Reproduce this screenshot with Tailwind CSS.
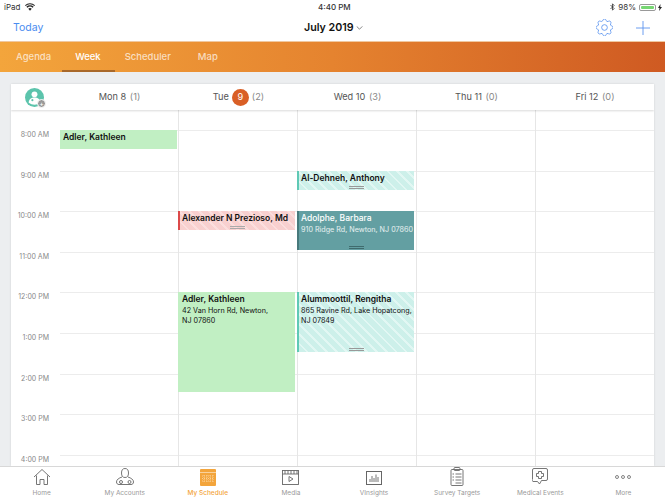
<!DOCTYPE html>
<html lang="en">
<head>
    <meta charset="UTF-8">
    <meta name="viewport" content="width=device-width, initial-scale=1.0">
    <title>My Schedule</title>
    <script src="https://cdn.jsdelivr.net/npm/@tailwindcss/browser@4"></script>
</head>
<body class="w-[665px] h-[498px] overflow-hidden bg-[#eceef0] font-['Inter','Liberation_Sans',sans-serif]">
    <div class="flex flex-col h-[498px]">
        <!-- Status bar -->
        <div class="relative flex items-center justify-between h-[14px] pl-1 pr-[3px] bg-white text-[8px] leading-none text-[#333] shrink-0">
            <div class="flex items-center gap-[5px]">
                <span>iPad</span>
                <svg class="w-[10px] h-[8px]" viewBox="0 0 12 9"><path d="M6 9 3.9 6.6a3 3 0 0 1 4.2 0zM2.9 5.5 1.6 4.1a6.3 6.3 0 0 1 8.8 0L9.1 5.5a4.4 4.4 0 0 0-6.2 0zM.8 3.2 0 2.3a8.6 8.6 0 0 1 12 0l-.8.9a7.5 7.5 0 0 0-10.4 0z" fill="#222"/></svg>
            </div>
            <span class="absolute left-[318px] font-medium">4:40 PM</span>
            <div class="flex items-center gap-[2px]">
                <svg class="w-[5px] h-[8px] mr-[1px]" viewBox="0 0 6 10"><path d="M.5 2.5 5 7 3 9V1l2 2-4.500 4.500" fill="none" stroke="#333" stroke-width="1"/></svg>
                <span>98%</span>
                <div class="w-[17px] h-[7px] ml-[1px] border border-[#999] rounded-[2px] p-[1px]"><div class="h-full bg-[#76d672] rounded-[1px]"></div></div>
                <svg class="w-[4px] h-[7px]" viewBox="0 0 4 7"><path d="M2.500 0 0 4h1.500L1 7l3-4H2.300z" fill="#222"/></svg>
            </div>
        </div>

        <!-- Nav bar -->
        <div class="relative flex items-center justify-between h-[27px] pl-[13px] pr-[15px] bg-white shrink-0">
            <span class="text-[10.5px] text-[#4a8cf0]">Today</span>
            <div class="absolute left-[304px] top-[5px] flex items-center gap-[2px]">
                <span class="text-[10.7px] leading-[17px] font-semibold text-[#111]">July 2019</span>
                <svg class="w-[7px] h-[4px] text-[#555]" viewBox="0 0 8 5"><path d="M.5.5 4 4 7.500.5" fill="none" stroke="currentColor" stroke-width="0.9"/></svg>
            </div>
            <div class="flex items-center gap-[23px]">
                <svg class="w-[17px] h-[17px] text-[#5b93ee]" viewBox="3 3 18 18" fill="none" stroke="currentColor" stroke-width="0.9"><path d="M10.325 4.317c.426-1.756 2.924-1.756 3.35 0a1.724 1.724 0 002.573 1.066c1.543-.94 3.31.826 2.37 2.37a1.724 1.724 0 001.065 2.572c1.756.426 1.756 2.924 0 3.35a1.724 1.724 0 00-1.066 2.573c.94 1.543-.826 3.31-2.37 2.37a1.724 1.724 0 00-2.572 1.065c-.426 1.756-2.924 1.756-3.35 0a1.724 1.724 0 00-2.573-1.066c-1.543.94-3.31-.826-2.37-2.37a1.724 1.724 0 00-1.065-2.572c-1.756-.426-1.756-2.924 0-3.35a1.724 1.724 0 001.066-2.573c-.94-1.543.826-3.31 2.37-2.37.996.608 2.296.07 2.572-1.065z"/><circle cx="12" cy="12" r="3"/></svg>
                <svg class="w-[14px] h-[14px] text-[#5b93ee]" viewBox="0 0 14 14"><path d="M7 0v14M0 7h14" stroke="currentColor" stroke-width="0.9"/></svg>
            </div>
        </div>

        <!-- Orange tabs -->
        <div class="relative flex items-center h-[31px] border-t border-[#f0c8a0] bg-[linear-gradient(90deg,#f3a53c_0%,#e5832f_50%,#cf5a22_100%)] text-[9.5px] font-medium text-white/70 shrink-0">
            <span class="ml-[16px]">Agenda</span>
            <span class="relative ml-[24px] text-white">Week
                <span class="absolute left-[-13px] right-[-14px] top-[20px] h-[2px] bg-[#a8682a]"></span>
            </span>
            <span class="ml-[24px]">Scheduler</span>
            <span class="ml-[27px]">Map</span>
        </div>

        <!-- Calendar card -->
        <div class="flex-1 min-h-0 mx-[11px] mt-[12px] bg-white flex flex-col overflow-hidden shadow-[0_0_2px_rgba(0,0,0,0.12)]">
            <div class="relative z-10 flex items-center h-[26px] bg-white text-[9.2px] text-[#555] shadow-[0_1px_2px_rgba(0,0,0,0.15)] shrink-0">
                <div class="w-[49px] shrink-0 pl-[14px]">
                    <div class="relative w-[19px] h-[19px] rounded-full bg-[#5cc4ac]">
                        <svg class="w-[19px] h-[19px]" viewBox="0 0 18 18"><circle cx="9" cy="6" r="2.800" fill="#fff"/><path d="M3.500 14c0-3.500 2.500-5 5.500-5s5.500 1.500 5.500 5a9 9 0 0 1-11 0z" fill="#fff"/><circle cx="7" cy="11.500" r="1" fill="#5cc4ac"/></svg>
                        <span class="absolute right-[-2px] bottom-[-1px] flex items-center justify-center w-[9px] h-[9px] rounded-full bg-[#999] border border-white text-[7px] leading-none text-white">+</span>
                    </div>
                </div>
                <div class="w-[119px] text-center">Mon 8 <span class="ml-[1px] text-[#888]">(1)</span></div>
                <div class="w-[119px] flex items-center justify-center gap-[3px]">Tue <span class="flex items-center justify-center w-[17px] h-[17px] rounded-full bg-[#d95f26] text-white">9</span> <span class="text-[#888]">(2)</span></div>
                <div class="w-[119px] text-center">Wed 10 <span class="ml-[1px] text-[#888]">(3)</span></div>
                <div class="w-[119px] text-center">Thu 11 <span class="ml-[1px] text-[#888]">(0)</span></div>
                <div class="w-[118px] text-center">Fri 12 <span class="ml-[1px] text-[#888]">(0)</span></div>
            </div>

            <!-- Week grid -->
            <div class="flex flex-1 min-h-0 pt-[20px]">
                <div class="w-[49px] shrink-0 pr-[11px] text-right text-[7px] text-[#888] whitespace-nowrap">
                    <div class="h-[40.6px] leading-[9px]">8:00 AM</div>
                    <div class="h-[40.6px] leading-[9px]">9:00 AM</div>
                    <div class="h-[40.6px] leading-[9px]">10:00 AM</div>
                    <div class="h-[40.6px] leading-[9px]">11:00 AM</div>
                    <div class="h-[40.6px] leading-[9px]">12:00 PM</div>
                    <div class="h-[40.6px] leading-[9px]">1:00 PM</div>
                    <div class="h-[40.6px] leading-[9px]">2:00 PM</div>
                    <div class="h-[40.6px] leading-[9px]">3:00 PM</div>
                    <div class="h-[40.6px] leading-[9px]">4:00 PM</div>
                </div>
                <div class="relative flex-1 -mt-[20px] pt-[20px]">
                    <!-- Hour lines -->
                    <div class="border-t border-[#ececec] h-[40.6px]"></div>
                    <div class="border-t border-[#ececec] h-[40.6px]"></div>
                    <div class="border-t border-[#ececec] h-[40.6px]"></div>
                    <div class="border-t border-[#ececec] h-[40.6px]"></div>
                    <div class="border-t border-[#ececec] h-[40.6px]"></div>
                    <div class="border-t border-[#ececec] h-[40.6px]"></div>
                    <div class="border-t border-[#ececec] h-[40.6px]"></div>
                    <div class="border-t border-[#ececec] h-[40.6px]"></div>
                    <div class="border-t border-[#ececec] h-[40.6px]"></div>
                    <!-- Day columns -->
                    <div class="absolute inset-0 flex">
                        <div class="relative w-[119px] border-r border-[#e6e6e6]">
                            <div class="absolute left-0 top-[20px] w-[116.5px] h-[19px] px-[3px] pt-[1px] bg-[#c1efc3] text-[8.5px] leading-[12px] font-semibold text-[#111]">Adler, Kathleen</div>
                        </div>
                        <div class="relative w-[119px] border-r border-[#e6e6e6]">
                            <div class="absolute left-[-1px] top-[101px] w-[117px] h-[19px] pl-[2px] pt-[1px] border-l-2 border-[#dc4a4a] bg-[repeating-linear-gradient(45deg,#f8d0cf_0px,#f8d0cf_5px,#fbdedd_5px,#fbdedd_7px)] text-[8.5px] leading-[12px] font-semibold text-[#111] whitespace-nowrap">
                                Alexander N Prezioso, Md
                                <div class="absolute left-[50px] bottom-[1px] w-[15px] h-[3px] border-y border-[#aaa]"></div>
                            </div>
                            <div class="absolute left-[-1px] top-[182px] w-[117px] h-[99.5px] pl-[4px] pt-[1px] bg-[#c1efc3] text-[#111]">
                                <div class="text-[8.5px] leading-[12px] font-semibold">Adler, Kathleen</div>
                                <div class="mt-[1px] text-[7.2px] leading-[9.5px]">42 Van Horn Rd, Newton,<br>NJ 07860</div>
                            </div>
                        </div>
                        <div class="relative w-[119px] border-r border-[#e6e6e6]">
                            <div class="absolute left-[-1px] top-[61px] w-[117px] h-[18.5px] pl-[2px] pt-[1px] border-l-2 border-[#5fc9b5] bg-[repeating-linear-gradient(45deg,#cdf0ea_0px,#cdf0ea_5px,#e2f7f3_5px,#e2f7f3_7px)] text-[8.5px] leading-[12px] font-semibold text-[#111]">
                                Al-Dehneh, Anthony
                                <div class="absolute left-[50px] bottom-[1px] w-[15px] h-[3px] border-y border-[#999]"></div>
                            </div>
                            <div class="absolute left-[-1px] top-[101px] w-[117px] h-[39px] pl-[2px] pt-[1px] border-l-2 border-[#47797b] bg-[#639fa2] text-white whitespace-nowrap">
                                <div class="text-[8.5px] leading-[12px] font-medium">Adolphe, Barbara</div>
                                <div class="mt-[1px] text-[7.2px] leading-[9.5px] text-white/85">910 Ridge Rd, Newton, NJ 07860</div>
                                <div class="absolute left-[50px] bottom-[1px] w-[15px] h-[3px] border-y border-[#3f6b6d]"></div>
                            </div>
                            <div class="absolute left-[-1px] top-[182px] w-[117px] h-[59.5px] pl-[2px] pt-[1px] border-l-2 border-[#5fc9b5] bg-[repeating-linear-gradient(45deg,#cdf0ea_0px,#cdf0ea_5px,#e2f7f3_5px,#e2f7f3_7px)] text-[#111] whitespace-nowrap">
                                <div class="text-[8.5px] leading-[12px] font-semibold">Alummoottil, Rengitha</div>
                                <div class="mt-[1px] text-[7.2px] leading-[9.5px]">865 Ravine Rd, Lake Hopatcong,<br>NJ 07849</div>
                                <div class="absolute left-[50px] bottom-[1px] w-[15px] h-[3px] border-y border-[#999]"></div>
                            </div>
                        </div>
                        <div class="w-[119px] border-r border-[#e6e6e6]"></div>
                        <div class="flex-1"></div>
                    </div>
                </div>
            </div>
        </div>

        <!-- Bottom tab bar -->
        <div class="grid grid-cols-8 h-[32px] border-t border-[#d8d8d8] bg-white text-[6.5px] leading-[8px] text-[#999] text-center shrink-0">
            <div class="flex flex-col items-center">
                <svg class="w-[18px] h-[18px] mt-[1px]" viewBox="0 0 18 18" fill="none" stroke="#666" stroke-width="0.9"><path d="M1 9 9 1.500 17 9M3.500 7.500V16.500h3.500v-5h4v5h3.500V7.500"/></svg>
                <span class="mt-[3px]">Home</span>
            </div>
            <div class="flex flex-col items-center">
                <svg class="w-[18px] h-[18px] mt-[1px]" viewBox="0 0 18 18" fill="none" stroke="#666" stroke-width="0.9"><ellipse cx="9" cy="5" rx="3.500" ry="4.500"/><path d="M6 9c-3 1-5.500 2.500-5.500 5 0 1.500 1 2.500 2.500 2.500h12c1.500 0 2.500-1 2.500-2.500 0-2.500-2.500-4-5.500-5"/><circle cx="5" cy="14" r="1.500"/><circle cx="13.500" cy="14" r="1.500"/></svg>
                <span class="mt-[3px]">My Accounts</span>
            </div>
            <div class="flex flex-col items-center text-[#f3a53c]">
                <svg class="w-[16px] h-[17px] mt-[1.5px]" viewBox="0 0 16 17"><rect width="16" height="17" rx="1" fill="#f3a53c"/><path d="M0 3.500h16" stroke="#fff" stroke-width="0.5"/><path d="M4 6v8M7 6v8M10 6v8M13 6v8M2 7h12M2 9.500h12M2 12h12" stroke="#fbd9a8" stroke-width="0.8" stroke-dasharray="1 1"/></svg>
                <span class="mt-[3.5px] font-medium">My Schedule</span>
            </div>
            <div class="flex flex-col items-center">
                <svg class="w-[17px] h-[15px] mt-[3px]" viewBox="0 0 17 15" fill="none" stroke="#666" stroke-width="0.9"><rect x="0.5" y="0.5" width="16" height="14"/><path d="M.5 4h16M3 .5v3.500M6 .5v3.500M9 .5v3.500M12 .5v3.500M15 .5v3.500" /><path d="M7 6.500v5l4-2.500z"/></svg>
                <span class="mt-[4px]">Media</span>
            </div>
            <div class="flex flex-col items-center">
                <svg class="w-[16px] h-[14px] mt-[3.5px]" viewBox="0 0 16 14" fill="none" stroke="#666"><rect x="0.5" y="0.5" width="15" height="13" stroke-width="1"/><path d="M4 11V8M6 11V5M8 11V7M10 11V3.500M12 11V6" stroke-width="0.9"/></svg>
                <span class="mt-[4.5px]">VInsights</span>
            </div>
            <div class="flex flex-col items-center">
                <svg class="w-[14px] h-[19px]" viewBox="0 0 14 19" fill="none" stroke="#666" stroke-width="0.9"><rect x="1" y="2.500" width="12" height="16" rx="1"/><rect x="4" y="0.5" width="6" height="3" rx="1"/><path d="M5.500 7h6M5.500 10h6M5.500 13h6M5.500 16h6M2.500 7h1.500M2.500 10h1.500M2.500 13h1.500"/></svg>
                <span class="mt-[3px]">Survey Targets</span>
            </div>
            <div class="flex flex-col items-center">
                <svg class="w-[16px] h-[17px] mt-[1px]" viewBox="0 0 16 17" fill="none" stroke="#666" stroke-width="0.9"><path d="M2 .5h12a1.500 1.500 0 0 1 1.500 1.500v9a1.500 1.500 0 0 1-1.500 1.500H9.500L7.500 16l-2-2.500H2A1.500 1.500 0 0 1 .5 11V2A1.500 1.500 0 0 1 2 .5z"/><path d="M6.500 3.500h3v2h2v3h-2v2h-3v-2h-2v-3h2z"/></svg>
                <span class="mt-[4px]">Medical Events</span>
            </div>
            <div class="flex flex-col items-center">
                <svg class="w-[16px] h-[4px] mt-[8px]" viewBox="0 0 16 4" fill="none" stroke="#666" stroke-width="0.8"><circle cx="2" cy="2" r="1.500"/><circle cx="8" cy="2" r="1.500"/><circle cx="14" cy="2" r="1.500"/></svg>
                <span class="mt-[10px]">More</span>
            </div>
        </div>
    </div>
</body>
</html>
